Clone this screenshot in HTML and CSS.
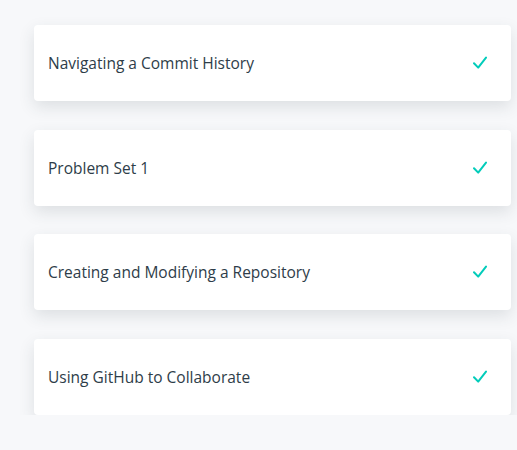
FILE: index.html
```html
<!DOCTYPE html>
<html>
<head>
<meta charset="utf-8">
<link rel="stylesheet" href="styles.css">
</head>
<body>
<ul class="list">
  <li class="card"><span class="title">Navigating a Commit History</span><svg class="check" width="14" height="14" viewBox="0 0 14 14"><path d="M1 7.2 L5.2 11.6 L13 1.6" fill="none" stroke="#02ccba" stroke-width="2" stroke-linecap="round" stroke-linejoin="round"/></svg></li>
  <li class="card"><span class="title">Problem Set 1</span><svg class="check" width="14" height="14" viewBox="0 0 14 14"><path d="M1 7.2 L5.2 11.6 L13 1.6" fill="none" stroke="#02ccba" stroke-width="2" stroke-linecap="round" stroke-linejoin="round"/></svg></li>
  <li class="card"><span class="title">Creating and Modifying a Repository</span><svg class="check" width="14" height="14" viewBox="0 0 14 14"><path d="M1 7.2 L5.2 11.6 L13 1.6" fill="none" stroke="#02ccba" stroke-width="2" stroke-linecap="round" stroke-linejoin="round"/></svg></li>
  <li class="card"><span class="title">Using GitHub to Collaborate</span><svg class="check" width="14" height="14" viewBox="0 0 14 14"><path d="M1 7.2 L5.2 11.6 L13 1.6" fill="none" stroke="#02ccba" stroke-width="2" stroke-linecap="round" stroke-linejoin="round"/></svg></li>
</ul>
</body>
</html>
```
FILE: styles.css
```css
html, body {
  margin: 0;
  padding: 0;
  background: #f7f8fa;
  font-family: "Open Sans", sans-serif;
}
.list {
  list-style: none;
  margin: 0;
  padding: 25px 6px 0 34px;
  display: flex;
  flex-direction: column;
  gap: 28.5px;
}
.card {
  height: 76px;
  box-sizing: border-box;
  background: #fff;
  border-radius: 4px;
  box-shadow: 0 6px 16px rgba(46, 61, 73, 0.13);
  display: flex;
  align-items: center;
  justify-content: space-between;
  padding: 0 24px 0 14px;
}
.title {
  font-size: 15.5px;
  color: #2e3d49;
}
.check {
  display: block;
}
```
